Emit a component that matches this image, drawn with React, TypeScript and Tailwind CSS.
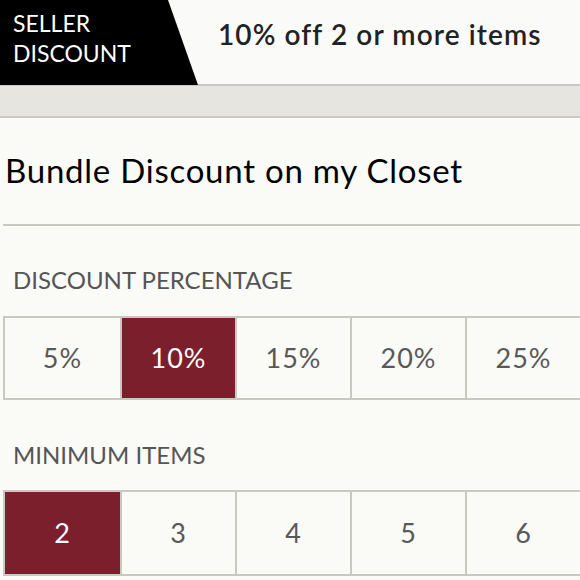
import React, { useState } from "react";

const percents = [5, 10, 15, 20, 25];
const minItems = [2, 3, 4, 5, 6];

const font = { fontFamily: "Lato, 'Noto Sans', sans-serif" };

type OptionRowProps = {
  options: string[];
  selected: number;
  onSelect: (i: number) => void;
  height: string;
};

const OptionRow = ({ options, selected, onSelect, height }: OptionRowProps) => (
  <div className={`ml-[3px] grid grid-cols-5 border-2 border-r-0 border-[#c9c8c1] ${height}`}>
    {options.map((label, i) => (
      <button
        key={label}
        onClick={() => onSelect(i)}
        className={`flex items-center justify-center text-[27px] tracking-[1px] ${
          i > 0 ? "border-l-2 border-[#c9c8c1]" : ""
        } ${i === selected ? "bg-[#7b1f2d] text-white" : "text-[#585858]"}`}
      >
        {label}
      </button>
    ))}
  </div>
);

export default function App() {
  const [pct, setPct] = useState(1);
  const [items, setItems] = useState(0);

  return (
    <div className="w-[580px] h-[580px] overflow-hidden bg-[#fafaf7]" style={font}>
      {/* Header */}
      <div className="relative h-[86px] border-b-2 border-[#c9c8c1] bg-[#fafaf8]">
        <div
          className="absolute left-0 top-0 h-[85px] w-[198px] bg-black"
          style={{ clipPath: "polygon(0 0, 168px 0, 198px 100%, 0 100%)" }}
        />
        <div className="relative flex h-full items-start">
          <div className="w-[218px] pl-[13px] pt-[8px] text-[23px] leading-[30px] text-white">
            SELLER
            <br />
            DISCOUNT
          </div>
          <div className="pt-[13px] text-[28px] font-semibold tracking-[1.1px] text-[#222]">
            10% off 2 or more items
          </div>
        </div>
      </div>

      {/* Band */}
      <div className="h-[32px] border-b-2 border-[#c9c8c1] bg-[#e6e5df]" />

      {/* Title */}
      <div className="ml-[3px] flex h-[108px] items-center border-b-2 border-[#c9c8c1] pl-[2px] text-[33px] tracking-[0.75px] text-black">
        Bundle Discount on my Closet
      </div>

      <div className="flex h-[90px] items-center pl-[13px] pt-[18px] text-[24px] text-[#555]">
        DISCOUNT PERCENTAGE
      </div>
      <OptionRow
        options={percents.map((p) => `${p}%`)}
        selected={pct}
        onSelect={setPct}
        height="h-[84px]"
      />

      <div className="flex h-[90px] items-center pl-[13px] pt-[20px] text-[24px] text-[#555]">MINIMUM ITEMS</div>
      <OptionRow
        options={minItems.map((n) => `${n}`)}
        selected={items}
        onSelect={setItems}
        height="h-[86px]"
      />
    </div>
  );
}
